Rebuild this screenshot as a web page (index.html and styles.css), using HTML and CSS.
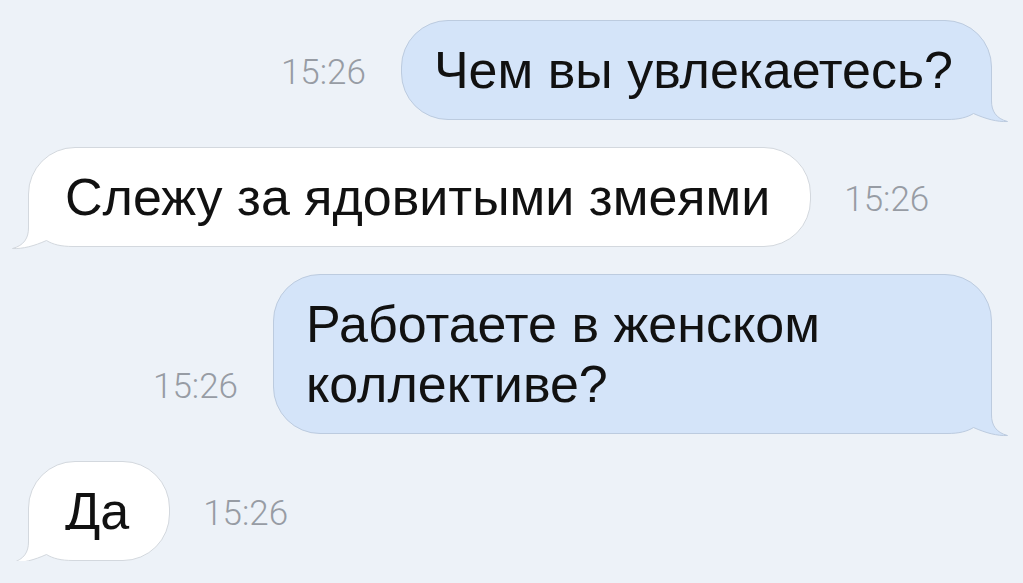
FILE: index.html
```html
<!DOCTYPE html>
<html lang="ru">
<head>
    <meta charset="UTF-8">
    <meta name="viewport" content="width=device-width, initial-scale=1.0">
    <title>Переписка</title>
    <link rel="stylesheet" href="styles.css">
</head>
<body>
    <div class="chat">
        <div class="row out">
            <span class="time">15:26</span>
            <div class="bubble">Чем вы увлекаетесь?
                <svg class="tail" width="64" height="34" viewBox="0 0 64 34"><rect class="bg" width="64" height="34"/><path class="body" d="M44.5 0V12C44.5 22 49 29.5 60.5 32.5C50 33 39 30 26.5 24.5C20 28.5 12 30.5 0 30.5L0 0Z"/><path class="edge" d="M44.5 0V12C44.5 22 49 29.5 60.5 32.5C50 33 39 30 26.5 24.5C20 28.5 12 30.5 0 30.5"/></svg>
            </div>
        </div>
        <div class="row in">
            <div class="bubble">Слежу за ядовитыми змеями
                <svg class="tail" width="64" height="34" viewBox="0 0 64 34"><rect class="bg" width="64" height="34"/><path class="body" d="M44.5 0V12C44.5 22 49 29.5 60.5 32.5C50 33 39 30 26.5 24.5C20 28.5 12 30.5 0 30.5L0 0Z"/><path class="edge" d="M44.5 0V12C44.5 22 49 29.5 60.5 32.5C50 33 39 30 26.5 24.5C20 28.5 12 30.5 0 30.5"/></svg>
            </div>
            <span class="time">15:26</span>
        </div>
        <div class="row out">
            <span class="time">15:26</span>
            <div class="bubble">Работаете в женском коллективе?
                <svg class="tail" width="64" height="34" viewBox="0 0 64 34"><rect class="bg" width="64" height="34"/><path class="body" d="M44.5 0V12C44.5 22 49 29.5 60.5 32.5C50 33 39 30 26.5 24.5C20 28.5 12 30.5 0 30.5L0 0Z"/><path class="edge" d="M44.5 0V12C44.5 22 49 29.5 60.5 32.5C50 33 39 30 26.5 24.5C20 28.5 12 30.5 0 30.5"/></svg>
            </div>
        </div>
        <div class="row in">
            <div class="bubble">Да
                <svg class="tail" width="64" height="34" viewBox="0 0 64 34"><rect class="bg" width="64" height="34"/><path class="body" d="M44.5 0V12C44.5 22 49 29.5 60.5 32.5C50 33 39 30 26.5 24.5C20 28.5 12 30.5 0 30.5L0 0Z"/><path class="edge" d="M44.5 0V12C44.5 22 49 29.5 60.5 32.5C50 33 39 30 26.5 24.5C20 28.5 12 30.5 0 30.5"/></svg>
            </div>
            <span class="time">15:26</span>
        </div>
    </div>
</body>
</html>
```

FILE: styles.css
```css
body {
    margin: 0;
    background-color: #edf2f8;
    font-family: "Liberation Sans", Arial, sans-serif;
    color: #111;
    overflow: hidden;
}
.chat {
    display: flex;
    flex-direction: column;
    gap: 27px;
    padding: 20px 31px 0 28px;
}
.row {
    display: flex;
    align-items: flex-end;
}
.row.out {
    justify-content: flex-end;
}
.time {
    font-family: Roboto, "Liberation Sans", sans-serif;
    font-weight: 300;
    font-size: 35px;
    line-height: 40px;
    color: #979ca4;
    margin-bottom: 27px;
}
.out .time {
    margin-right: 35px;
}
.in .time {
    margin-left: 33px;
}
.bubble {
    --fill: #fff;
    --edge: #d3d8de;
    position: relative;
    font-size: 52px;
    line-height: 60px;
    padding: 19px 40px 19px 36px;
    border: 1px solid var(--edge);
    border-radius: 47px;
    background: var(--fill);
}
.out .bubble {
    --fill: #d4e4f9;
    --edge: #bccbdf;
    max-width: 719px;
    box-sizing: border-box;
    padding: 19px 38px 19px 32px;
    border-bottom-right-radius: 0;
}
.in .bubble {
    border-bottom-left-radius: 0;
}
.tail {
    position: absolute;
    right: -20px;
    bottom: -4px;
    display: block;
}
.in .tail {
    right: auto;
    left: -20px;
    transform: scaleX(-1);
}
.tail .bg {
    fill: #edf2f8;
}
.tail .body {
    fill: var(--fill);
}
.tail .edge {
    fill: none;
    stroke: var(--edge);
    stroke-width: 1;
}
```
